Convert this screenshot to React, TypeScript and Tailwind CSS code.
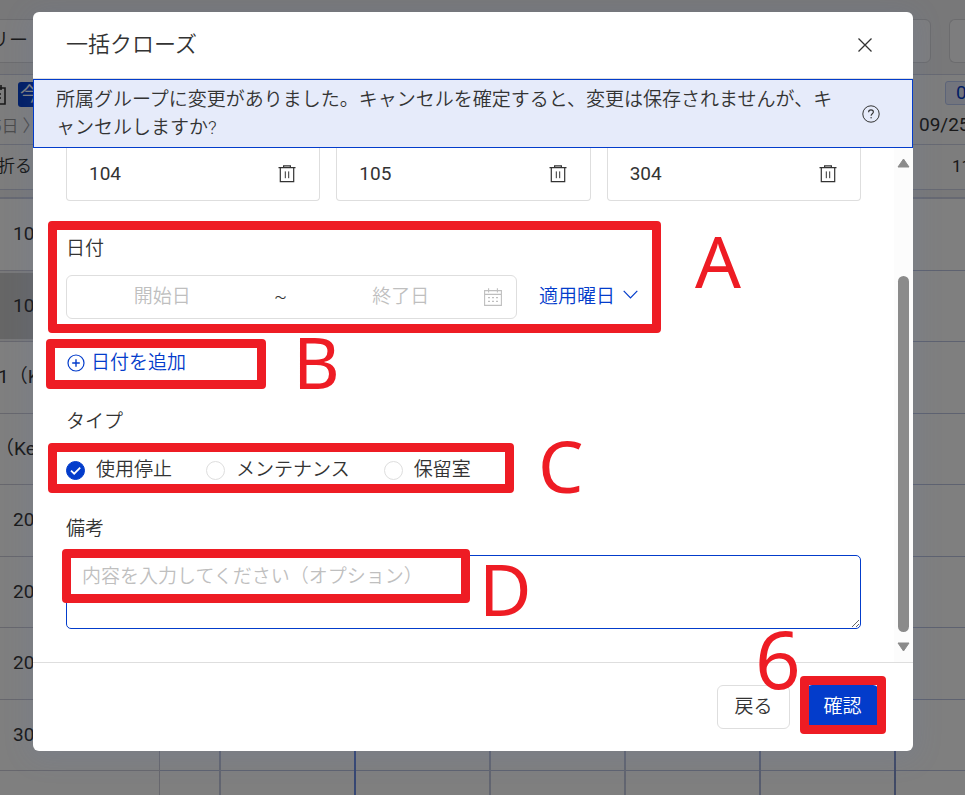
import { useState } from "react";

const ROOMS = ["104", "105", "304"];
const TYPES = ["使用停止", "メンテナンス", "保留室"];
const CALENDAR_ROWS = [
  { label: "104", indent: "pl-[13px]" },
  { label: "105", indent: "pl-[13px]", active: true },
  { label: "1（Key）", indent: "-ml-[2px]" },
  { label: "（Key）", indent: "-ml-[5px]" },
  { label: "201", indent: "pl-[13px]" },
  { label: "202", indent: "pl-[13px]" },
  { label: "203", indent: "pl-[13px]" },
  { label: "301", indent: "pl-[13px]" },
];

function CloseIcon() {
  return (
    <svg width="14" height="14" viewBox="0 0 14 14" fill="none" stroke="currentColor" strokeWidth="1.3">
      <path d="M.5.5l13 13M13.5.5l-13 13" />
    </svg>
  );
}

function QuestionIcon() {
  return (
    <svg className="shrink-0" width="18" height="18" viewBox="0 0 18 18" fill="none" stroke="currentColor" strokeWidth="1">
      <circle cx="9" cy="9" r="8.2" />
      <path d="M6.6 7.2c0-1.4 1-2.3 2.4-2.3s2.4.9 2.4 2.1c0 1.7-2.3 1.8-2.3 3.7" strokeWidth="1.1" />
      <circle cx="9.1" cy="12.7" r=".7" fill="currentColor" stroke="none" />
    </svg>
  );
}

function TrashIcon() {
  return (
    <svg width="18" height="18" viewBox="0 0 18 18" fill="none" stroke="currentColor" strokeWidth="1.2">
      <path d="M.5 2.7h17M2.3 2.7v14h13.4v-14" />
      <path d="M7.3 6.4v6.8M10.7 6.4v6.8" strokeWidth="1" />
      <path d="M5.6 2.5V.9h6.8v1.6" />
    </svg>
  );
}

function CalendarIcon() {
  return (
    <svg className="shrink-0" width="18" height="18" viewBox="0 0 18 18" fill="none" stroke="currentColor" strokeWidth="1.1">
      <path d="M.6 2.6h16.8v14.8H.6zM.6 6.4h16.8M4.6.2v4.2M13.4.2v4.2" />
      <path d="M4 9.6h2M8 9.6h2M12 9.6h2M4 13.4h2M8 13.4h2M12 13.4h2" strokeWidth="1.4" />
    </svg>
  );
}

function PlusCircleIcon() {
  return (
    <svg width="18" height="18" viewBox="0 0 18 18" fill="none" stroke="currentColor" strokeWidth="1.2">
      <circle cx="9" cy="9" r="8" />
      <path d="M9 5.2v7.6M5.2 9h7.6" strokeWidth="1.4" />
    </svg>
  );
}

function ChevronIcon() {
  return (
    <svg width="15" height="14" viewBox="0 0 15 14" fill="none" stroke="currentColor" strokeWidth="1.2">
      <path d="M.7.9l6.8 7 6.8-7" />
    </svg>
  );
}

// Red frame used to mark a step of the manual
function Mark({ className }: { className: string }) {
  return <div className={`pointer-events-none absolute z-10 rounded-[4px] border-9 border-[#ee1c24] ${className}`} />;
}

function MarkLabel({ className, children }: { className: string; children: string }) {
  return (
    <span className={`pointer-events-none absolute z-10 font-['Noto_Sans',sans-serif] font-normal leading-none text-[#ee1c24] ${className}`}>
      {children}
    </span>
  );
}

function CalendarPage() {
  return (
    <div aria-hidden="true" className="flex h-screen flex-col overflow-hidden bg-[#f0f0f3] text-[#333]">
      <div className="flex h-[75px] items-start justify-between border-b border-[#cfd3e4] pt-[19px]">
        <div className="h-11 w-[160px] border-y border-[#d8d8dc] bg-[#fbfbfc] leading-[42px]">
          <span className="-ml-[10px]">リー</span>
        </div>
        <div className="flex gap-[18px]">
          <div className="h-11 w-[100px] rounded-md border border-[#d8d8dc] bg-[#fbfbfc]" />
          <div className="h-11 w-4 rounded-l-md border border-r-0 border-[#d8d8dc] bg-[#fbfbfc]" />
        </div>
      </div>
      <div className="flex h-[70px] justify-between border-b border-[#cfd3e4] bg-[#fafafb]">
        <div className="w-[160px]">
          <div className="flex items-center gap-3 pt-[7px]">
            <svg className="-ml-3" width="18" height="20" viewBox="0 0 18 20" fill="none" stroke="currentColor" strokeWidth="1.6">
              <path d="M1 3h16v16H1zM5 0v5M13 0v5M5 9h8M5 13h8" />
            </svg>
            <span className="rounded-[3px] bg-[#033ccb] px-[2px] leading-[25px] text-white">今日</span>
          </div>
          <div className="-ml-[8px] flex gap-1 text-[17px] leading-6 text-[#999] pt-[7px]">
            <span>5日</span>
            <span>〉</span>
          </div>
        </div>
        <div className="w-[46px] whitespace-nowrap pt-[6px] font-normal">
          <div className="ml-[26px] w-10 rounded-[3px] border border-[#b9c8f2] bg-[#e6ebfa] pl-[10px] leading-[22px] text-[#033ccb]">0</div>
          <div className="leading-10">09/25</div>
        </div>
      </div>
      <div className="flex h-[45px] items-center justify-between border-b border-[#cfd3e4] bg-[#fafafb] text-[17px]">
        <span className="-ml-[2px]">折る</span>
        <span className="w-[13px] font-normal">11</span>
      </div>
      <div className="h-[9px] shrink-0 border-b-2 border-[#cfd3e4]" />
      <div className="flex min-h-0 flex-1">
        <div className="w-[160px] shrink-0 border-r border-[#cfcfda] font-normal">
          {CALENDAR_ROWS.map((row) => (
            <div
              key={row.label}
              className={`flex h-[72px] items-center border-b border-[#cfcfda] even:h-[71px] ${row.active ? "bg-[#cccccc] bg-clip-content py-[2px]" : "bg-white"}`}
            >
              <span className={row.indent}>{row.label}</span>
            </div>
          ))}
          <div className="h-12 bg-white" />
        </div>
        <div className="flex min-w-0 flex-1 bg-[repeating-linear-gradient(to_bottom,#fff_0px,#fff_71px,#bcc4e0_71px,#bcc4e0_72px,#fff_72px,#fff_142px,#bcc4e0_142px,#bcc4e0_143px)]">
          <div className="w-[61px] shrink-0 border-r-2 border-[#c5cae0]" />
          <div className="w-[135px] shrink-0 border-r-2 border-[#6f8fe6]" />
          <div className="w-[135px] shrink-0 border-r-2 border-[#c5cae0]" />
          <div className="w-[135px] shrink-0 border-r-2 border-[#c5cae0]" />
          <div className="w-[135px] shrink-0 border-r-2 border-[#b0badd]" />
          <div className="w-[135px] shrink-0 border-r-2 border-[#8295cc]" />
        </div>
      </div>
    </div>
  );
}

export default function App() {
  const [type, setType] = useState(TYPES[0]);
  const [note, setNote] = useState("");

  return (
    <div lang="ja" className="relative min-h-screen overflow-hidden font-['Roboto','Noto_Sans_CJK_JP',sans-serif] text-[19px] font-[350] text-[#333]">
      <CalendarPage />

      <div className="absolute inset-0 bg-black/50 pl-[33px] pr-[52px] pt-3">
        <div role="dialog" aria-labelledby="dialog-title" className="rounded-md bg-white shadow-[0_4px_28px_4px_rgba(90,120,200,0.12)]">
          <header className="flex items-center justify-between border-b border-[#dedede] py-4 pl-[33px] pr-[41px]">
            <h2 id="dialog-title" className="text-[22px] leading-[34px]">一括クローズ</h2>
            <button aria-label="閉じる"><CloseIcon /></button>
          </header>

          <div className="flex items-center gap-4 border border-[#033ccb] bg-[#e6ebfa] pb-[5px] pl-[22px] pr-8 pt-[6px]">
            <p className="flex-1 leading-7 [line-break:anywhere]">
              所属グループに変更がありました。キャンセルを確定すると、変更は保存されませんが、キャンセルしますか?
            </p>
            <QuestionIcon />
          </div>

          <div className="flex">
            <div className="min-w-0 flex-1 px-[33px] pb-[33px]">
              <ul className="grid grid-cols-3 gap-4">
                {ROOMS.map((room) => (
                  <li key={room} className="flex h-[53px] items-center justify-between rounded-b border border-t-0 border-[#dedede] pl-[22px] pr-[23px]">
                    <span className="font-normal">{room}</span>
                    <button aria-label={`${room}を削除`}><TrashIcon /></button>
                  </li>
                ))}
              </ul>

              <section className="relative mt-[34px]">
                <label htmlFor="start-date" className="block leading-7">日付</label>
                <div className="mt-3 flex items-center gap-[22px]">
                  <div className="flex h-11 w-[451px] items-center rounded-md border border-[#dedede] pl-3 pr-[14px]">
                    <input id="start-date" placeholder="開始日" className="min-w-0 flex-1 pr-[10px] pt-px text-center outline-none placeholder:text-[#bfbfbf]" />
                    <span className="w-[50px] text-center">~</span>
                    <input aria-label="終了日" placeholder="終了日" className="min-w-0 flex-1 pl-3 pt-px text-center outline-none placeholder:text-[#bfbfbf]" />
                    <span className="text-[#bfbfbf]"><CalendarIcon /></span>
                  </div>
                  <button className="flex items-center gap-2 leading-7 text-[#033ccb]">
                    適用曜日
                    <ChevronIcon />
                  </button>
                </div>
                <Mark className="-left-[18px] -top-[14px] h-28 w-[613px]" />
                <MarkLabel className="-top-[11px] left-[629px] text-[72px]">A</MarkLabel>
              </section>

              <div className="relative mt-[30px]">
                <button className="flex items-center gap-[6px] pl-px leading-7 text-[#033ccb]">
                  <PlusCircleIcon />
                  日付を追加
                </button>
                <Mark className="-left-5 -top-[10px] h-[50px] w-[220px]" />
                <MarkLabel className="-top-[24px] left-[227px] text-[72px]">B</MarkLabel>
              </div>

              <fieldset className="mt-[31px]">
                <legend className="leading-7">タイプ</legend>
                <div className="relative mt-5 flex gap-[34px]">
                  {TYPES.map((item) => (
                    <label key={item} className="flex items-center gap-[11px] leading-7">
                      <span className="relative flex">
                        <input
                          type="radio"
                          name="type"
                          checked={type === item}
                          onChange={() => setType(item)}
                          className="size-[19px] appearance-none rounded-full border border-[#dedede] checked:border-[#033ccb] checked:bg-[#033ccb]"
                        />
                        {type === item && (
                          <svg className="pointer-events-none absolute inset-0" width="19" height="19" viewBox="0 0 19 19" fill="none" stroke="#fff" strokeWidth="1.8">
                            <path d="M5 9.6l3.2 3.1 6-6" />
                          </svg>
                        )}
                      </span>
                      {item}
                    </label>
                  ))}
                  <Mark className="-left-[18px] -top-[13px] h-[50px] w-[466px]" />
                  <MarkLabel className="-top-[27px] left-[472px] text-[72px]">C</MarkLabel>
                </div>
              </fieldset>

              <label htmlFor="note" className="mt-[31px] block leading-7">備考</label>
              <div className="relative mt-3">
                <textarea
                  id="note"
                  value={note}
                  onChange={(e) => setNote(e.target.value)}
                  placeholder="内容を入力してください（オプション）"
                  className="block h-[74px] w-full rounded-[5px] border border-[#033ccb] px-[15px] py-[7px] leading-7 outline-none placeholder:text-[#bfbfbf]"
                />
                <Mark className="-left-1 -top-[6px] h-[54px] w-[408px]" />
                <MarkLabel className="-top-[3px] left-[413px] text-[72px]">D</MarkLabel>
              </div>
            </div>

            <div aria-hidden="true" className="flex w-[19px] flex-col items-center bg-[#fcfcfc] py-[10px] text-[#8b8b8b]">
              <svg width="13" height="10" viewBox="0 0 13 10" fill="currentColor" stroke="currentColor" strokeWidth="1" strokeLinejoin="round">
                <path d="M6.5 1L12 9H1z" />
              </svg>
              <div className="mb-[10px] mt-[108px] w-[11px] flex-1 rounded-full bg-[#8b8b8b]" />
              <svg width="13" height="10" viewBox="0 0 13 10" fill="currentColor" stroke="currentColor" strokeWidth="1" strokeLinejoin="round">
                <path d="M6.5 9L12 1H1z" />
              </svg>
            </div>
          </div>

          <footer className="flex justify-end gap-4 border-t border-[#dedede] py-[22px] pl-[33px] pr-[34px]">
            <button className="h-11 w-[73px] rounded-md border border-[#dedede]">戻る</button>
            <div className="relative">
              <button className="h-11 w-[73px] rounded-md bg-[#033ccb] text-white">確認</button>
              <Mark className="-left-[6px] -top-[9px] h-[58px] w-[86px]" />
              <MarkLabel className="-left-[51px] -top-[67px] text-[80px]">6</MarkLabel>
            </div>
          </footer>
        </div>
      </div>
    </div>
  );
}
